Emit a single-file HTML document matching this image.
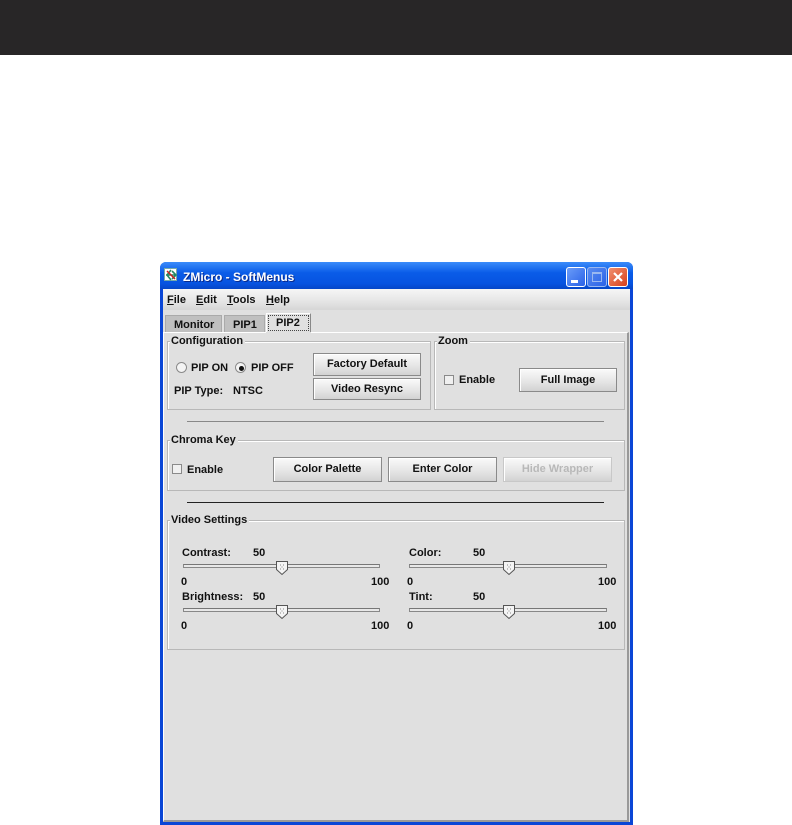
<!DOCTYPE html>
<html><head><style>
*{margin:0;padding:0;box-sizing:border-box}
body{width:792px;height:825px;background:#fff;position:relative;overflow:hidden;font-family:"Liberation Sans",Arial,sans-serif;font-size:11px;font-weight:bold;color:#111}
.a{position:absolute}
.t{position:absolute;white-space:nowrap;line-height:12px}
.btn{position:absolute;border:1px solid #8a8a8a;background:linear-gradient(#fafafa,#e4e4e4 60%,#d2d2d2);text-align:center;box-shadow:inset 1px 1px 0 #fff}
.grp{position:absolute;border:1px solid #b8b8b8;box-shadow:1px 1px 0 #fff inset}
.gt{position:absolute;background:#e0e0e0;padding:0 2px 0 1px;font-weight:bold;line-height:12px;top:-7px;left:2px}
.trk{position:absolute;height:4px;border:1px solid #888;background:#e8e8e8;border-top-color:#777}
.cb{position:absolute;width:10px;height:10px;border:1px solid #8a8a8a;background:#f0f0f0}
.rad{position:absolute;width:11px;height:11px;border-radius:50%;border:1px solid #8a8a8a;background:#f4f4f4}
</style></head><body>
<div class="a" style="left:0;top:0;width:792px;height:55px;background:#282627"></div>

<!-- window frame -->
<div class="a" style="left:160px;top:262px;width:473px;height:563px;background:#0a46d6;border-radius:6px 6px 0 0"></div>
<div class="a" style="left:160px;top:262px;width:473px;height:27px;background:linear-gradient(#3b8cfa,#0a5ce8 40%,#0753e0 80%,#0646c8);border-radius:6px 6px 0 0"></div>
<div class="a" style="left:164px;top:268px;width:13px;height:13px;background:#fff;border:1px solid #7aa"></div>
<svg class="a" style="left:164px;top:268px" width="14" height="14"><path d="M2 7h10M7 2l-4 5 4 5M8 3l4 4-4 4" stroke="#286" stroke-width="1.6" fill="none"/><path d="M3 3l8 8" stroke="#c22" stroke-width="1.5"/></svg>
<div class="t" style="left:183px;top:271px;color:#fff;font-size:12px;text-shadow:1px 1px 0 #0a2a8a">ZMicro - SoftMenus</div>
<div class="a" style="left:566px;top:267px;width:20px;height:20px;border:1px solid #fff;border-radius:3px;background:linear-gradient(135deg,#6a9cf8,#2a62e8)"></div>
<div class="a" style="left:571px;top:280px;width:7px;height:3px;background:#fff"></div>
<div class="a" style="left:587px;top:267px;width:20px;height:20px;border:1px solid #9ab8f0;border-radius:3px;background:linear-gradient(135deg,#5a8cf0,#2a62e8)"></div>
<div class="a" style="left:592px;top:272px;width:10px;height:10px;border:1px solid #9ab8f0;border-top-width:2px"></div>
<div class="a" style="left:608px;top:267px;width:20px;height:20px;border:1px solid #fff;border-radius:3px;background:linear-gradient(135deg,#f09070,#d8401c)"></div>
<svg class="a" style="left:608px;top:267px" width="20" height="20"><path d="M6 6l8 8M14 6l-8 8" stroke="#fff" stroke-width="2.2"/></svg>

<!-- client -->
<div class="a" style="left:163px;top:289px;width:467px;height:533px;background:#e0e0e0"></div>
<div class="a" style="left:163px;top:289px;width:467px;height:21px;background:linear-gradient(#f6f6f6,#e8e8e8 50%,#d6d6d6)"></div>
<div class="t" style="left:167px;top:294px"><u>F</u>ile</div>
<div class="t" style="left:196px;top:294px"><u>E</u>dit</div>
<div class="t" style="left:227px;top:294px"><u>T</u>ools</div>
<div class="t" style="left:266px;top:294px"><u>H</u>elp</div>

<!-- tabs -->
<div class="a" style="left:165px;top:315px;width:57px;height:17px;background:#c0c0c0;border:1px solid #aaa;border-bottom:none"></div>
<div class="t" style="left:174px;top:319px">Monitor</div>
<div class="a" style="left:224px;top:315px;width:41px;height:17px;background:#c0c0c0;border:1px solid #aaa;border-bottom:none"></div>
<div class="t" style="left:233px;top:319px">PIP1</div>
<div class="a" style="left:266px;top:313px;width:45px;height:20px;background:#e0e0e0;border:1px solid #fff;border-right-color:#888;border-bottom:none"></div>
<div class="a" style="left:268px;top:315px;width:41px;height:16px;border:1px dotted #444"></div>
<div class="t" style="left:276px;top:317px">PIP2</div>
<div class="a" style="left:163px;top:332px;width:466px;height:490px;border-top:1px solid #fff;border-left:1px solid #fff;border-right:2px solid #999;border-bottom:2px solid #999"></div>
<div class="a" style="left:266px;top:332px;width:45px;height:1px;background:#e0e0e0"></div>

<!-- Configuration -->
<div class="grp" style="left:167px;top:341px;width:264px;height:69px"><span class="gt">Configuration</span></div>
<div class="rad" style="left:176px;top:362px"></div>
<div class="t" style="left:191px;top:362px;font-weight:normal;font-weight:bold">PIP ON</div>
<div class="rad" style="left:235px;top:362px"></div>
<div class="a" style="left:239px;top:366px;width:5px;height:5px;border-radius:50%;background:#111"></div>
<div class="t" style="left:251px;top:362px">PIP OFF</div>
<div class="t" style="left:174px;top:385px">PIP Type:</div>
<div class="t" style="left:233px;top:385px">NTSC</div>
<div class="btn" style="left:313px;top:353px;width:108px;height:23px;line-height:21px">Factory Default</div>
<div class="btn" style="left:313px;top:378px;width:108px;height:22px;line-height:20px">Video Resync</div>

<!-- Zoom -->
<div class="grp" style="left:434px;top:341px;width:191px;height:69px"><span class="gt">Zoom</span></div>
<div class="cb" style="left:444px;top:375px"></div>
<div class="t" style="left:459px;top:374px">Enable</div>
<div class="btn" style="left:519px;top:368px;width:98px;height:24px;line-height:22px">Full Image</div>

<div class="a" style="left:187px;top:421px;width:417px;height:1px;background:#888"></div>

<!-- Chroma -->
<div class="grp" style="left:167px;top:440px;width:458px;height:51px"><span class="gt">Chroma Key</span></div>
<div class="cb" style="left:172px;top:464px"></div>
<div class="t" style="left:187px;top:464px">Enable</div>
<div class="btn" style="left:273px;top:457px;width:109px;height:25px;line-height:23px">Color Palette</div>
<div class="btn" style="left:388px;top:457px;width:109px;height:25px;line-height:23px">Enter Color</div>
<div class="btn" style="left:503px;top:457px;width:109px;height:25px;line-height:23px;color:#b8b8b8;border-color:#c8c8c8">Hide Wrapper</div>

<div class="a" style="left:187px;top:502px;width:417px;height:1px;background:#222"></div>

<!-- Video settings -->
<div class="grp" style="left:167px;top:520px;width:458px;height:130px"><span class="gt">Video Settings</span></div>

<div class="t" style="left:182px;top:547px">Contrast:</div><div class="t" style="left:253px;top:547px">50</div>
<div class="trk" style="left:183px;top:564px;width:197px"></div>
<div class="t" style="left:181px;top:576px">0</div><div class="t" style="left:371px;top:576px">100</div>
<div class="t" style="left:409px;top:547px">Color:</div><div class="t" style="left:473px;top:547px">50</div>
<div class="trk" style="left:409px;top:564px;width:198px"></div>
<div class="t" style="left:407px;top:576px">0</div><div class="t" style="left:598px;top:576px">100</div>

<div class="t" style="left:182px;top:591px">Brightness:</div><div class="t" style="left:253px;top:591px">50</div>
<div class="trk" style="left:183px;top:608px;width:197px"></div>
<div class="t" style="left:181px;top:620px">0</div><div class="t" style="left:371px;top:620px">100</div>
<div class="t" style="left:409px;top:591px">Tint:</div><div class="t" style="left:473px;top:591px">50</div>
<div class="trk" style="left:409px;top:608px;width:198px"></div>
<div class="t" style="left:407px;top:620px">0</div><div class="t" style="left:598px;top:620px">100</div>

<svg class="a" style="left:275px;top:560px" width="15" height="16"><path d="M1.5 1.5h11v8l-5.5 5-5.5-5z" fill="#f4f4f4" stroke="#555"/><path d="M5 5h1M8 5h1M6.5 7h1M5 9h1M8 9h1" stroke="#888"/></svg>
<svg class="a" style="left:502px;top:560px" width="15" height="16"><path d="M1.5 1.5h11v8l-5.5 5-5.5-5z" fill="#f4f4f4" stroke="#555"/><path d="M5 5h1M8 5h1M6.5 7h1M5 9h1M8 9h1" stroke="#888"/></svg>
<svg class="a" style="left:275px;top:604px" width="15" height="16"><path d="M1.5 1.5h11v8l-5.5 5-5.5-5z" fill="#f4f4f4" stroke="#555"/><path d="M5 5h1M8 5h1M6.5 7h1M5 9h1M8 9h1" stroke="#888"/></svg>
<svg class="a" style="left:502px;top:604px" width="15" height="16"><path d="M1.5 1.5h11v8l-5.5 5-5.5-5z" fill="#f4f4f4" stroke="#555"/><path d="M5 5h1M8 5h1M6.5 7h1M5 9h1M8 9h1" stroke="#888"/></svg>
</body></html>
